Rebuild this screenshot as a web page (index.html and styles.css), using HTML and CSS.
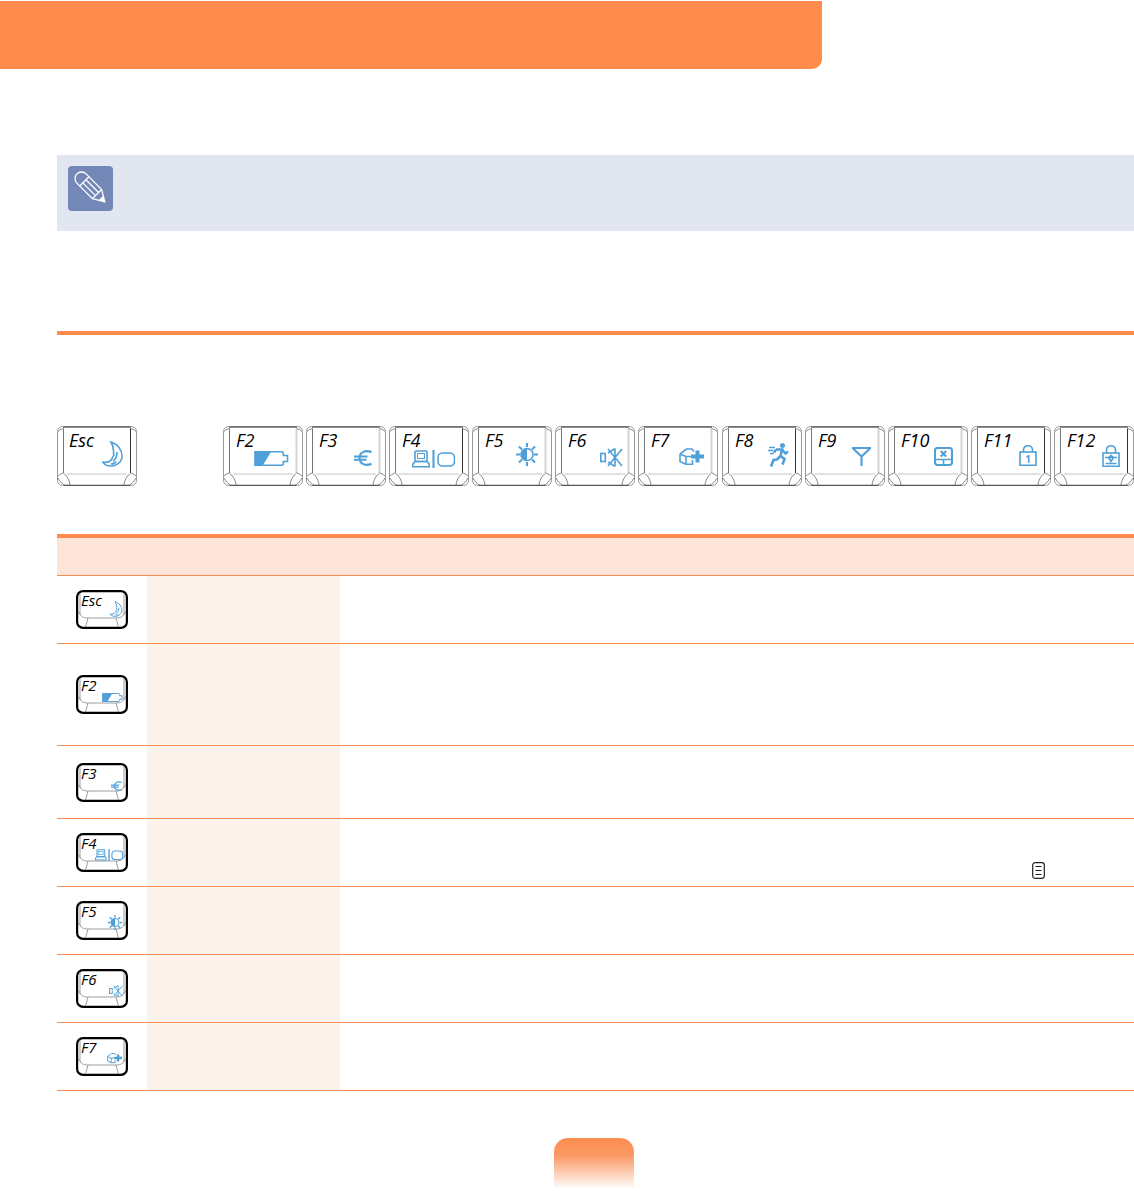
FILE: index.html
```html
<!DOCTYPE html>
<html lang="en">
<head>
<meta charset="utf-8">
<title>Function keys</title>
<link rel="stylesheet" href="styles.css">
</head>
<body>
<svg class="defs" aria-hidden="true">
  <symbol id="cap" viewBox="0 0 80 60">
    <rect class="cap-outer" x="0.5" y="0.5" width="79" height="59" rx="5"/>
    <path class="cap-top" d="M6 1H74"/>
    <path class="cap-bottom" d="M7 59.300H73"/>
    <path class="cap-edge-left" d="M6.500 2.500V47"/>
    <path class="cap-edge-right" d="M73.500 2.500V47"/>
    <path class="cap-front" d="M10 48H70"/>
    <path class="cap-line" d="M6.500 47C9 49.500 12 52 13 59M73.500 47C71 49.500 68 52 67 59M1 50C3 48 5 47.500 6.500 47M79 50C77 48 75 47.500 73.500 47M1 5.500C3 3.500 5 2.800 6.500 2.500M79 5.500C77 3.500 75 2.800 73.500 2.500M1 52C2.500 55 5 58 8 59.300M79 52C77.500 55 75 58 72 59.300"/>
  </symbol>
  <symbol id="cap-small" viewBox="0 0 52 39">
    <rect class="cap-small-outer" x="1.100" y="1.100" width="49.800" height="36.800" rx="6"/>
    <path class="cap-small-line" d="M4 3V23C4 26 7 28 12 28H40C45 28 48 26 48 23V3M12 28L9.500 37M40 28L42.500 37M2 21C3 23 3.500 24 4.500 25M50 21C49 23 48.500 24 47.500 25"/>
  </symbol>
  <symbol id="i-moon" viewBox="0 0 21 26">
    <path class="ic" d="M9 1C15.500 3 20.500 9 20 16C19.500 22 13 25.500 8 25C5 24.800 2 23.500 0.800 21C4 21.800 7.500 21 9.500 18.500C11 16.500 10.300 15.500 12 14C11 12.500 12 11 11.500 9.500C11.300 6.500 10.500 3.500 9 1Z"/>
    <path class="ic" d="M11 20C13 19 15 15.500 15 11M9 23C11 23 13 22 14 20.500"/>
  </symbol>
  <symbol id="i-battery" viewBox="0 0 35 15">
    <path class="ic-fill" d="M1 1H17L9 14H1Z"/>
    <path class="ic" d="M1 0.800H28C29 0.800 29.300 1.500 29.300 3V4.500H33.500V10.500H29.300V12C29.300 13.500 29 14.200 28 14.200H1Z"/>
  </symbol>
  <symbol id="i-euro" viewBox="0 0 18 16">
    <path class="ic ic-bold" d="M17.500 2.300C12 -0.500 5.500 2 5.500 8C5.500 14 12 16.500 17.500 13.700M0 6.500H13.500M0 9.700H12.500"/>
  </symbol>
  <symbol id="i-display" viewBox="0 0 43 18">
    <rect class="ic" x="3" y="1" width="12" height="10.500" rx="1"/>
    <rect class="ic-thin" x="5.500" y="3.500" width="7" height="5"/>
    <path class="ic" d="M3 11.500L0.800 14V16.800H17.200V14L15 11.500Z"/>
    <path class="ic ic-bold" d="M21.500 0V18"/>
    <rect class="ic" x="26" y="3" width="16.500" height="13" rx="4.500"/>
  </symbol>
  <symbol id="i-sun" viewBox="0 0 22 23">
    <path class="ic-fill" d="M11 5.500A6 6 0 0 0 11 17.500Z"/>
    <circle class="ic" cx="11" cy="11.500" r="6"/>
    <path class="ic ic-bold" d="M11 0V4M11 19V23M0 11.500H4M18 11.500H22M3 3.500L6 6.500M16 16.500L19 19.500M19 3.500L16 6.500M6 16.500L3 19.500"/>
  </symbol>
  <symbol id="i-mute" viewBox="0 0 23 19">
    <rect class="ic" x="0.800" y="5.500" width="4.500" height="8"/>
    <path class="ic" d="M8 5L15 0.500M8 14L15 18.500M8 1L22 18M22 1L8 18M15 0.500V18.500"/>
  </symbol>
  <symbol id="i-box" viewBox="0 0 25 17">
    <path class="ic" d="M1 6L7.500 1H13L15 3.500M1 6V13.500L7 16.300H13.500V12M1 6L7 8.500V16.300M7 8.500H12"/>
    <path class="ic-fill" d="M16.500 2.500H20.500V6.500H25V10.500H20.500V14.500H16.500V10.500H12V6.500H16.500Z"/>
  </symbol>
  <symbol id="i-run" viewBox="0 0 21 24">
    <circle class="ic-fill" cx="14.500" cy="2.500" r="2.500"/>
    <path class="ic ic-heavy" d="M8 6.500H14L12.500 13L16.500 16L14.500 21.500M12.500 13L9 16.500L5.500 17L3 23.500M14 6.500L17.500 10.500L20 8.500M8 6.500L6 9.500"/>
    <path class="ic" d="M1 4.500H7M0 7.500H5M2 10.500H6"/>
  </symbol>
  <symbol id="i-antenna" viewBox="0 0 19 19">
    <path class="ic ic-bold" d="M0.500 1H18.500L9.500 9.500ZM9.500 9.500V19"/>
  </symbol>
  <symbol id="i-pad" viewBox="0 0 19 19">
    <rect class="ic ic-bold" x="1" y="1" width="17" height="17" rx="2.500"/>
    <path class="ic" d="M1 12.500H18M9.500 12.500V18"/>
    <path class="ic ic-bold" d="M6.800 4L12.200 9.500M12.200 4L6.800 9.500"/>
  </symbol>
  <symbol id="i-lock-body" viewBox="0 0 18 21">
    <rect class="ic" x="1" y="7" width="16" height="13.300"/>
    <path class="ic" d="M4.500 7V5C4.500 2.500 6.500 0.800 9 0.800C11.500 0.800 13.500 2.500 13.500 5V7"/>
  </symbol>
  <symbol id="i-lock-scroll" viewBox="0 0 18 22">
    <rect class="ic" x="1" y="8" width="16" height="13.300"/>
    <path class="ic" d="M4.500 8V5C4.500 2.500 6.500 0.800 9 0.800C11.500 0.800 13.500 2.500 13.500 5V8"/>
    <path class="ic" d="M3 12.500H15M6.500 12.500L9 10.500L11.500 12.500L9 16.500ZM3.500 18.500H14.500"/>
  </symbol>
</svg>

<header class="banner"></header>

<main class="content">
  <section class="note">
    <div class="note-badge">
      <svg class="pencil" viewBox="0 0 45 45" aria-hidden="true">
        <g transform="translate(13.500 12.500) rotate(45)">
          <path class="pencil-line" d="M0 -6.500H22L33 0L22 6.500H0A6.500 6.500 0 0 1 0 -6.500ZM4 -6.500V6.500M4 -2.200H22M4 2.200H22M22 -6.500V6.500"/>
          <path class="pencil-tip" d="M27.500 -3.300L33 0L27.500 3.300Z"/>
        </g>
      </svg>
    </div>
  </section>

  <hr class="rule">

  <div class="key-row">
    <svg class="key key-esc edge-dark" viewBox="0 0 80 60"><use href="#cap"/><text class="key-label" x="12" y="21">Esc</text><use href="#i-moon" x="45" y="15" width="21" height="26"/></svg>
    <svg class="key edge-light" viewBox="0 0 80 60"><use href="#cap"/><text class="key-label" x="13" y="21">F2</text><use href="#i-battery" x="31" y="25" width="35" height="15"/></svg>
    <svg class="key edge-light" viewBox="0 0 80 60"><use href="#cap"/><text class="key-label" x="13" y="21">F3</text><use href="#i-euro" x="48" y="24" width="18" height="16"/></svg>
    <svg class="key edge-dark" viewBox="0 0 80 60"><use href="#cap"/><text class="key-label" x="13" y="21">F4</text><use href="#i-display" x="23" y="24" width="43" height="18"/></svg>
    <svg class="key edge-light" viewBox="0 0 80 60"><use href="#cap"/><text class="key-label" x="13" y="21">F5</text><use href="#i-sun" x="44" y="17" width="22" height="23"/></svg>
    <svg class="key edge-light" viewBox="0 0 80 60"><use href="#cap"/><text class="key-label" x="13" y="21">F6</text><use href="#i-mute" x="45" y="22" width="23" height="19"/></svg>
    <svg class="key edge-light" viewBox="0 0 80 60"><use href="#cap"/><text class="key-label" x="13" y="21">F7</text><use href="#i-box" x="41" y="22" width="25" height="17"/></svg>
    <svg class="key edge-dark" viewBox="0 0 80 60"><use href="#cap"/><text class="key-label" x="13" y="21">F8</text><use href="#i-run" x="46" y="17" width="21" height="24"/></svg>
    <svg class="key edge-light" viewBox="0 0 80 60"><use href="#cap"/><text class="key-label" x="13" y="21">F9</text><use href="#i-antenna" x="47" y="21" width="19" height="19"/></svg>
    <svg class="key edge-light" viewBox="0 0 80 60"><use href="#cap"/><text class="key-label" x="13" y="21">F10</text><use href="#i-pad" x="46" y="21" width="19" height="19"/></svg>
    <svg class="key edge-dark" viewBox="0 0 80 60"><use href="#cap"/><text class="key-label" x="13" y="21">F11</text><use href="#i-lock-body" x="48" y="19" width="18" height="21"/><text class="lock-digit" x="57" y="37">1</text></svg>
    <svg class="key edge-dark" viewBox="0 0 80 60"><use href="#cap"/><text class="key-label" x="13" y="21">F12</text><use href="#i-lock-scroll" x="48" y="19" width="18" height="22"/></svg>
  </div>

  <div class="keys-table">
    <div class="table-head"></div>

    <div class="table-row row-68">
      <div class="cell-key"><svg class="key-small" viewBox="0 0 52 39"><use href="#cap-small"/><text class="key-small-label" x="5" y="16">Esc</text><use href="#i-moon" x="33" y="11" width="14" height="16"/></svg></div>
      <div class="cell-name"></div>
      <div class="cell-desc"></div>
    </div>
    <div class="table-row row-102">
      <div class="cell-key"><svg class="key-small" viewBox="0 0 52 39"><use href="#cap-small"/><text class="key-small-label" x="5" y="16">F2</text><use href="#i-battery" x="26" y="18" width="21" height="9"/></svg></div>
      <div class="cell-name"></div>
      <div class="cell-desc"></div>
    </div>
    <div class="table-row row-73">
      <div class="cell-key"><svg class="key-small" viewBox="0 0 52 39"><use href="#cap-small"/><text class="key-small-label" x="5" y="16">F3</text><use href="#i-euro" x="35" y="18" width="11" height="10"/></svg></div>
      <div class="cell-name"></div>
      <div class="cell-desc"></div>
    </div>
    <div class="table-row row-68">
      <div class="cell-key"><svg class="key-small" viewBox="0 0 52 39"><use href="#cap-small"/><text class="key-small-label" x="5" y="16">F4</text><use href="#i-display" x="19" y="16" width="28" height="12"/></svg></div>
      <div class="cell-name"></div>
      <div class="cell-desc cell-desc-menu">
        <svg class="menu-key" viewBox="0 0 13 17" aria-hidden="true">
          <rect class="menu-key-box" x="0.700" y="0.700" width="11.600" height="15.600" rx="2.500"/>
          <path class="menu-key-lines" d="M3.500 4.500H9.500M3.500 8.500H9.500M3.500 12.500H9.500"/>
        </svg>
      </div>
    </div>
    <div class="table-row row-68">
      <div class="cell-key"><svg class="key-small" viewBox="0 0 52 39"><use href="#cap-small"/><text class="key-small-label" x="5" y="16">F5</text><use href="#i-sun" x="31" y="14" width="16" height="15"/></svg></div>
      <div class="cell-name"></div>
      <div class="cell-desc"></div>
    </div>
    <div class="table-row row-68">
      <div class="cell-key"><svg class="key-small" viewBox="0 0 52 39"><use href="#cap-small"/><text class="key-small-label" x="5" y="16">F6</text><use href="#i-mute" x="33" y="15" width="14" height="14"/></svg></div>
      <div class="cell-name"></div>
      <div class="cell-desc"></div>
    </div>
    <div class="table-row row-68">
      <div class="cell-key"><svg class="key-small" viewBox="0 0 52 39"><use href="#cap-small"/><text class="key-small-label" x="5" y="16">F7</text><use href="#i-box" x="31" y="15" width="15" height="12"/></svg></div>
      <div class="cell-name"></div>
      <div class="cell-desc"></div>
    </div>
  </div>
</main>

<footer class="page-tab-wrap"><div class="page-tab"></div></footer>
</body>
</html>
```

FILE: styles.css
```css
html, body {
  margin: 0;
  padding: 0;
  background: #fff;
}

body {
  width: 1134px;
  height: 1191px;
  overflow: hidden;
  font-family: "Open Sans", sans-serif;
}

.defs {
  position: absolute;
  width: 0;
  height: 0;
}

.banner {
  width: 822px;
  height: 68px;
  margin-top: 1px;
  background: #ff8c4c;
  border-bottom-right-radius: 10px;
}

.content {
  margin-left: 57px;
}

.note {
  height: 76px;
  margin-top: 86px;
  padding: 11px;
  box-sizing: border-box;
  background: #e2e6f1;
}

.note-badge {
  width: 45px;
  height: 45px;
  border-radius: 4px;
  background: #7488b8;
}

.pencil {
  display: block;
  width: 45px;
  height: 45px;
}

.pencil-line {
  fill: none;
  stroke: #fff;
  stroke-width: 1.3;
}

.pencil-tip {
  fill: #fff;
}

.rule {
  height: 4px;
  margin: 100px 0 0;
  border: 0;
  background: #ff8c4c;
}

.key-row {
  display: flex;
  gap: 3.1px;
  margin-top: 91px;
}

.key {
  display: block;
  flex: none;
  width: 80px;
  height: 60px;
}

.key-esc {
  margin-right: 82.9px;
}

.edge-dark {
  --edge: #333;
  --edge-width: 1;
}

.edge-light {
  --edge: #d4d4d4;
  --edge-width: 2;
}

.cap-outer {
  fill: #fff;
  stroke: #999;
  stroke-width: 1;
}

.cap-top {
  stroke: #666;
  stroke-width: 1.4;
}

.cap-bottom {
  stroke: #555;
  stroke-width: 1.2;
}

.cap-edge-left {
  stroke: #777;
  stroke-width: 1;
}

.cap-edge-right {
  stroke: var(--edge);
  stroke-width: var(--edge-width);
}

.cap-front {
  stroke: #d8d8d8;
  stroke-width: 1.5;
}

.cap-line {
  fill: none;
  stroke: #666;
  stroke-width: 0.8;
}

.key-label {
  font-family: "Open Sans", sans-serif;
  font-style: italic;
  font-weight: 500;
  font-size: 18px;
  fill: #000;
}

.key-small {
  display: block;
  width: 52px;
  height: 39px;
}

.cap-small-outer {
  fill: #fff;
  stroke: #000;
  stroke-width: 2.2;
}

.cap-small-line {
  fill: none;
  stroke: #777;
  stroke-width: 0.7;
}

.key-small-label {
  font-family: "Open Sans", sans-serif;
  font-style: italic;
  font-size: 15px;
  fill: #000;
}

.ic {
  fill: none;
  stroke: #4f9fd8;
  stroke-width: 1.6;
}

.ic-thin {
  fill: none;
  stroke: #4f9fd8;
  stroke-width: 1;
}

.ic-bold {
  stroke-width: 2.1;
}

.ic-heavy {
  stroke-width: 2.6;
}

.ic-fill {
  fill: #4f9fd8;
  stroke: none;
}

.lock-digit {
  font-family: "Open Sans", sans-serif;
  font-size: 10px;
  font-weight: 700;
  text-anchor: middle;
  fill: #4f9fd8;
}

.keys-table {
  margin-top: 48px;
  border-top: 4px solid #ff8c4c;
}

.table-head {
  height: 37px;
  background: #fde5da;
  border-bottom: 1px solid #f58e55;
}

.table-row {
  display: grid;
  grid-template-columns: 90px 193px 1fr;
  box-sizing: border-box;
  border-bottom: 1px solid #f58e55;
}

.row-68 {
  height: 68px;
}

.row-102 {
  height: 102px;
}

.row-73 {
  height: 73px;
}

.cell-key {
  display: flex;
  align-items: center;
  padding-left: 19px;
}

.cell-name {
  background: #fdf1ec;
}

.cell-desc-menu {
  display: flex;
  align-items: flex-end;
  padding: 0 0 7px 692px;
}

.menu-key {
  display: block;
  width: 13px;
  height: 17px;
}

.menu-key-box {
  fill: #fff;
  stroke: #222;
  stroke-width: 1.2;
}

.menu-key-lines {
  fill: none;
  stroke: #222;
  stroke-width: 1;
}

.page-tab-wrap {
  display: flex;
  margin-top: 47px;
  padding-left: 554px;
}

.page-tab {
  width: 80px;
  height: 51px;
  border-radius: 14px 14px 0 0;
  background: linear-gradient(#fb8c4e 0%, #fb9a66 35%, #fff 100%);
}
```
